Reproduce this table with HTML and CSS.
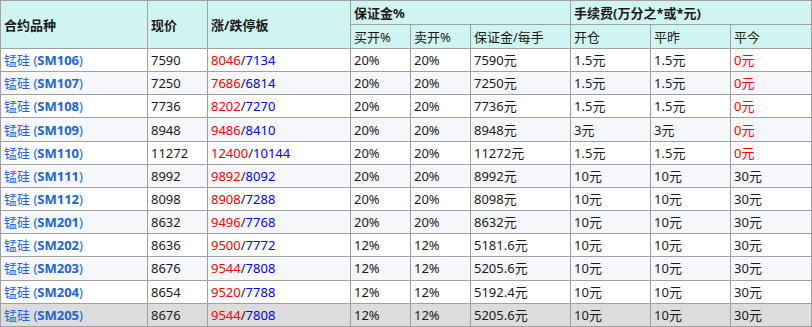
FILE: index.html
```html
<!DOCTYPE html>
<html lang="zh">
<head>
<meta charset="utf-8">
<link rel="stylesheet" href="styles.css">
</head>
<body>
<table class="tbl">
  <colgroup>
    <col class="c1"><col class="c2"><col class="c3"><col class="c4"><col class="c5"><col class="c6"><col class="c7"><col class="c8"><col class="c9">
  </colgroup>
  <thead>
    <tr class="h1">
      <th rowspan="2">合约品种</th>
      <th rowspan="2">现价</th>
      <th rowspan="2">涨/跌停板</th>
      <th colspan="3">保证金%</th>
      <th colspan="3">手续费(万分之*或*元)</th>
    </tr>
    <tr class="h2">
      <th>买开%</th><th>卖开%</th><th>保证金/每手</th>
      <th>开仓</th><th>平昨</th><th>平今</th>
    </tr>
  </thead>
  <tbody>
    <tr><td class="name">锰硅 (<b>SM106</b>)</td><td>7590</td><td><span class="up">8046</span>/<span class="dn">7134</span></td><td>20%</td><td>20%</td><td>7590元</td><td>1.5元</td><td>1.5元</td><td class="up">0元</td></tr>
    <tr><td class="name">锰硅 (<b>SM107</b>)</td><td>7250</td><td><span class="up">7686</span>/<span class="dn">6814</span></td><td>20%</td><td>20%</td><td>7250元</td><td>1.5元</td><td>1.5元</td><td class="up">0元</td></tr>
    <tr><td class="name">锰硅 (<b>SM108</b>)</td><td>7736</td><td><span class="up">8202</span>/<span class="dn">7270</span></td><td>20%</td><td>20%</td><td>7736元</td><td>1.5元</td><td>1.5元</td><td class="up">0元</td></tr>
    <tr><td class="name">锰硅 (<b>SM109</b>)</td><td>8948</td><td><span class="up">9486</span>/<span class="dn">8410</span></td><td>20%</td><td>20%</td><td>8948元</td><td>3元</td><td>3元</td><td class="up">0元</td></tr>
    <tr><td class="name">锰硅 (<b>SM110</b>)</td><td>11272</td><td><span class="up">12400</span>/<span class="dn">10144</span></td><td>20%</td><td>20%</td><td>11272元</td><td>1.5元</td><td>1.5元</td><td class="up">0元</td></tr>
    <tr><td class="name">锰硅 (<b>SM111</b>)</td><td>8992</td><td><span class="up">9892</span>/<span class="dn">8092</span></td><td>20%</td><td>20%</td><td>8992元</td><td>10元</td><td>10元</td><td>30元</td></tr>
    <tr><td class="name">锰硅 (<b>SM112</b>)</td><td>8098</td><td><span class="up">8908</span>/<span class="dn">7288</span></td><td>20%</td><td>20%</td><td>8098元</td><td>10元</td><td>10元</td><td>30元</td></tr>
    <tr><td class="name">锰硅 (<b>SM201</b>)</td><td>8632</td><td><span class="up">9496</span>/<span class="dn">7768</span></td><td>20%</td><td>20%</td><td>8632元</td><td>10元</td><td>10元</td><td>30元</td></tr>
    <tr><td class="name">锰硅 (<b>SM202</b>)</td><td>8636</td><td><span class="up">9500</span>/<span class="dn">7772</span></td><td>12%</td><td>12%</td><td>5181.6元</td><td>10元</td><td>10元</td><td>30元</td></tr>
    <tr><td class="name">锰硅 (<b>SM203</b>)</td><td>8676</td><td><span class="up">9544</span>/<span class="dn">7808</span></td><td>12%</td><td>12%</td><td>5205.6元</td><td>10元</td><td>10元</td><td>30元</td></tr>
    <tr><td class="name">锰硅 (<b>SM204</b>)</td><td>8654</td><td><span class="up">9520</span>/<span class="dn">7788</span></td><td>12%</td><td>12%</td><td>5192.4元</td><td>10元</td><td>10元</td><td>30元</td></tr>
    <tr class="hover"><td class="name">锰硅 (<b>SM205</b>)</td><td>8676</td><td><span class="up">9544</span>/<span class="dn">7808</span></td><td>12%</td><td>12%</td><td>5205.6元</td><td>10元</td><td>10元</td><td>30元</td></tr>
  </tbody>
</table>
</body>
</html>
```
FILE: styles.css
```css
html, body {
  margin: 0;
  padding: 0;
  background: #ffffff;
}
body {
  font-family: "Noto Sans", "Noto Sans CJK SC", sans-serif;
  font-size: 13px;
  color: #1a1a1a;
}
.tbl {
  border-collapse: collapse;
  table-layout: fixed;
  width: 811px;
}
.c1 { width: 147px; }
.c2 { width: 60px; }
.c3 { width: 143px; }
.c4 { width: 60px; }
.c5 { width: 60px; }
.c6 { width: 100px; }
.c7 { width: 80px; }
.c8 { width: 80px; }
.c9 { width: 81px; }
.tbl th, .tbl td {
  border: 1px solid #a0a0a0;
  padding: 0 3px;
  text-align: left;
  white-space: nowrap;
  overflow: hidden;
}
.tbl th {
  background: #d0f5f0;
  font-weight: bold;
  height: 23px;
  line-height: 18px;
}
.h2 th {
  font-weight: normal;
}
.tbl td {
  height: 22.17px;
  line-height: 18px;
}
.tbl tbody tr:nth-child(even) td {
  background: #f5f7fa;
}
.tbl tbody tr.hover td {
  background: #dcdcdc;
}
.name {
  color: #1e63d8;
}
.name b {
  font-weight: bold;
}
.up { color: #ff0000; }
.dn { color: #0000ff; }
```
